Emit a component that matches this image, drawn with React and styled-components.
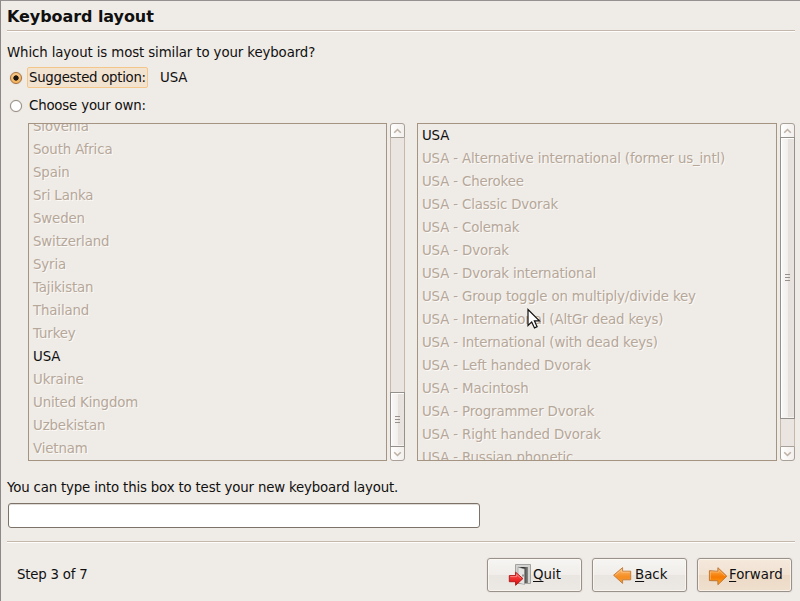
import React from "react";
import styled, { createGlobalStyle, css } from "styled-components";

const GlobalStyle = createGlobalStyle`
  *, *::before, *::after { box-sizing: border-box; }
  body { margin: 0; background: #efebe7; }
`;

const Window = styled.main`
  position: relative;
  width: 800px;
  height: 601px;
  padding: 0 5px 0 6px;
  overflow: hidden;
  display: flex;
  flex-direction: column;
  background: #efebe6;
  border-top: 1px solid #949190;
  border-left: 1px solid #8c8988;
  color: #101010;
  font: 13.33px/20px "DejaVu Sans", sans-serif;
  white-space: nowrap;
  cursor: default;
`;

const Title = styled.h1`
  margin: 0;
  height: 29px;
  padding-top: 6px;
  font-size: 16px;
  line-height: 20px;
  font-weight: bold;
  letter-spacing: -0.07px;
`;

const Separator = styled.hr`
  flex: none;
  width: 788px;
  height: 2px;
  margin: 0;
  border: 0;
  border-top: 1px solid #c3b8ab;
  background: #fffefc;
`;

const Question = styled.p`
  width: fit-content;
  margin: ${(p) => p.$gap}px 0 0;
  letter-spacing: ${(p) => p.$tracking || 0}px;
`;

const Option = styled.label`
  display: flex;
  align-items: center;
  height: 21px;
  margin-top: ${(p) => p.$gap}px;
  padding-left: 3px;
`;

const Radio = styled.span`
  width: 12px;
  height: 12px;
  margin-top: 1px;
  border-radius: 50%;
  border: 1px solid ${(p) => (p.$checked ? "#a9713a" : "#968d85")};
  background: ${(p) =>
    p.$checked
      ? "radial-gradient(circle, #1c1712 0 2.3px, transparent 3px), linear-gradient(#f8c98a, #f4b45d)"
      : "#fff"};
  box-shadow: 0 0 1px #b9afa5;
`;

const OptionLabel = styled.span`
  width: 121px;
  height: 21px;
  margin-left: 5px;
  padding: 0 1px;
  line-height: 19px;
  letter-spacing: ${(p) => (p.$focused ? "-0.29px" : "-0.18px")};
  border: 1px solid ${(p) => (p.$focused ? "#f5c689" : "transparent")};
  border-radius: 2px;
  background: ${(p) => (p.$focused ? "#f2e2d0" : "none")};
`;

const OptionValue = styled.span`
  margin-left: 12px;
  line-height: 21px;
  letter-spacing: -0.1px;
`;

const Lists = styled.section`
  display: flex;
  flex: none;
  height: 338px;
  margin: 7px 0 0 21px;
`;

const ListBox = styled.ul`
  width: ${(p) => p.$width}px;
  margin: 0 3px 0 0;
  padding: 0 4px;
  overflow: hidden;
  list-style: none;
  border: 1px solid #a59482;
  letter-spacing: ${(p) => p.$tracking}px;
`;

const ListItem = styled.li`
  height: 23px;
  line-height: 23px;
  &:first-child { margin-top: ${(p) => p.$scroll}px; }
  ${(p) =>
    p.$selected
      ? css`color: #101010;`
      : css`color: #b5a799; text-shadow: 1px 1px 0 #fcfaf7;`}
`;

const Scrollbar = styled.div`
  display: flex;
  flex-direction: column;
  width: 15px;
  margin-right: ${(p) => p.$gap}px;
  background: #eae5e0;
  border-radius: 3px;
`;

const Stepper = styled.div`
  flex: none;
  display: grid;
  place-items: center;
  height: 15px;
  border: 1px solid #a9a098;
  border-radius: ${(p) => (p.$down ? "0 0 3px 3px" : "3px 3px 0 0")};
  background: linear-gradient(90deg, #fff, #f2efec);
  svg { transform: ${(p) => (p.$down ? "scaleY(-1)" : "none")}; }
`;

const Trough = styled.div`
  flex: none;
  height: ${(p) => p.$height}px;
  border: solid #c6b9ac;
  border-width: 0 1px;
`;

const Thumb = styled.div`
  flex: none;
  display: grid;
  place-items: center;
  height: ${(p) => p.$height}px;
  margin: -1px 0;
  padding-bottom: 1px;
  z-index: 1;
  border: 1px solid #96908a;
  background: linear-gradient(90deg, #faf9f8 0, #f2efed 50%, #e6e0dc 51%, #eae4e0 100%);
  box-shadow: inset 1px 1px 0 #fff, inset 0 -1px 0 #f6f4f2;
`;

const Grip = styled.span`
  width: 5px;
  height: 7px;
  border: solid #98918b;
  border-width: 1px 0;
  background: linear-gradient(#98918b, #98918b) 0 2px / 5px 1px no-repeat;
`;

const TestInput = styled.input`
  flex: none;
  width: 472px;
  height: 25px;
  margin: 5px 0 13px 1px;
  padding: 0 5px;
  border: 1px solid #7d7268;
  border-radius: 3px;
  outline: 0;
  background: #fff;
  box-shadow: inset 0 1px 0 #dedbd8;
  font: inherit;
`;

const Footer = styled.footer`
  display: flex;
  padding: 15px 3px 0 10px;
  gap: 10px;
`;

const Step = styled.span`
  flex: 1;
  margin-top: 7px;
  letter-spacing: -0.22px;
`;

const Button = styled.button`
  display: flex;
  align-items: center;
  justify-content: flex-start;
  width: 95px;
  height: 34px;
  padding: 0 0 1px ${(p) => p.$inset}px;
  border: 1px solid #99928a;
  border-radius: 3px;
  color: #101010;
  font: inherit;
  background: ${(p) =>
    p.$primary
      ? "linear-gradient(#f5e9dc 0, #f1e2d2 49%, #ecdac6 50%, #efdfce 100%)"
      : "linear-gradient(#f7f5f3 0, #f0edea 49%, #e9e5e1 50%, #ece8e4 100%)"};
  box-shadow: inset 0 0 0 1px #fffaf5aa, 0 0 0 1px #e9e4df;
  svg { flex: none; margin-right: 1px; }
`;

const Mnemonic = styled.span`
  text-decoration: underline;
  text-decoration-thickness: 1px;
  text-underline-offset: 2px;
  text-decoration-skip-ink: none;
`;

const PointerIcon = styled.svg`
  position: absolute;
  left: 525px;
  top: 307px;
`;

const Chevron = () => (
  <svg width="9" height="6" viewBox="0 0 9 6">
    <path d="M1.2 4.7 4.5 1.5 7.8 4.7" fill="none" stroke="#beb2a6" strokeWidth="1.6" />
  </svg>
);

const BackIcon = () => (
  <svg width="22" height="23" viewBox="0 0 22 23">
    <defs>
      <linearGradient id="backFill" x1="0" y1="0" x2="0" y2="1">
        <stop offset="0" stopColor="#fbbd73" />
        <stop offset=".6" stopColor="#f58d22" />
        <stop offset="1" stopColor="#f69a35" />
      </linearGradient>
    </defs>
    <path
      d="M18.7 8.2H10.6V4.6L1.6 12.2 10.6 20.4V16.8H18.7z"
      fill="url(#backFill)"
      stroke="#c5803f"
      strokeLinejoin="round"
    />
    <path d="M17.7 9.2H9.6V6.9L3.2 12.2" fill="none" stroke="#ffd9aa" strokeWidth=".7" opacity=".7" />
  </svg>
);

const ForwardIcon = () => (
  <svg width="22" height="23" viewBox="0 0 22 23">
    <defs>
      <linearGradient id="forwardFill" x1="0" y1="0" x2="0" y2="1">
        <stop offset="0" stopColor="#fcb45a" />
        <stop offset=".55" stopColor="#f57900" />
        <stop offset="1" stopColor="#ffa320" />
      </linearGradient>
    </defs>
    <path
      d="M3.4 7.7 11.9 8.3V4.7L20.8 13.2 11.9 21.7V17.8L3.4 17.6z"
      fill="url(#forwardFill)"
      stroke="#bf7634"
      strokeLinejoin="round"
    />
    <path d="M4.4 16.6V8.8L12.9 9.2V7.2L19.2 13.2" fill="none" stroke="#ffcf92" strokeWidth=".7" opacity=".7" />
  </svg>
);

const QuitIcon = () => (
  <svg width="24" height="23" viewBox="0 0 24 23">
    <defs>
      <linearGradient id="doorway">
        <stop offset="0" stopColor="#111" />
        <stop offset=".55" stopColor="#333" />
        <stop offset="1" stopColor="#8a8a88" />
      </linearGradient>
      <linearGradient id="quitFill" x1="0" y1="0" x2="0" y2="1">
        <stop offset="0" stopColor="#ff5a5a" />
        <stop offset="1" stopColor="#dc0505" />
      </linearGradient>
    </defs>
    <path d="M7.5 1.5h15v19h-15z" fill="#d3d3d1" stroke="#a3a39f" />
    <path d="M10 4h10v16H10z" fill="url(#doorway)" />
    <path d="m10 4 6.5 2V21.5L10 20z" fill="#e4e4e2" stroke="#888" strokeWidth=".5" />
    <path d="M14.4 11.5h1.2v2h-1.2z" fill="#666" />
    <path d="M1.3 12.6H7.6V9.2L14.9 15.6 7.6 22.3V18.7H1.3z" fill="url(#quitFill)" stroke="#b51d1d" strokeLinejoin="round" />
    <path d="M2.3 13.6H8.6V11.4L12.9 15.2" fill="none" stroke="#ff9d9a" strokeWidth=".7" />
  </svg>
);

const Pointer = () => (
  <PointerIcon width="15" height="23" viewBox="0 0 15 23">
    <path
      d="M2 1.5v16l3.7-3.6 2.8 6 2.6-1.2-2.7-5.8h5z"
      fill="#fff"
      stroke="#111"
      strokeWidth="1.2"
    />
  </PointerIcon>
);

const countries = [
  "Slovenia", "South Africa", "Spain", "Sri Lanka", "Sweden", "Switzerland", "Syria", "Tajikistan",
  "Thailand", "Turkey", "USA", "Ukraine", "United Kingdom", "Uzbekistan", "Vietnam",
];

const variants = [
  "USA", "USA - Alternative international (former us_intl)", "USA - Cherokee", "USA - Classic Dvorak",
  "USA - Colemak", "USA - Dvorak", "USA - Dvorak international",
  "USA - Group toggle on multiply/divide key", "USA - International (AltGr dead keys)",
  "USA - International (with dead keys)", "USA - Left handed Dvorak", "USA - Macintosh",
  "USA - Programmer Dvorak", "USA - Right handed Dvorak", "USA - Russian phonetic",
];

const LayoutList = ({ items, width, tracking, scroll = 0 }) => (
  <ListBox $width={width} $tracking={tracking}>
    {items.map((name) => (
      <ListItem key={name} $selected={name === "USA"} $scroll={scroll}>{name}</ListItem>
    ))}
  </ListBox>
);

const ListScrollbar = ({ before, thumb, after, gap = 0 }) => (
  <Scrollbar $gap={gap}>
    <Stepper><Chevron /></Stepper>
    <Trough $height={before} />
    <Thumb $height={thumb}><Grip /></Thumb>
    <Trough $height={after} />
    <Stepper $down><Chevron /></Stepper>
  </Scrollbar>
);

export default function App() {
  return (
    <>
      <GlobalStyle />
      <Window>
        <Title>Keyboard layout</Title>
        <Separator />
        <Question $gap={11} $tracking={-0.11}>Which layout is most similar to your keyboard?</Question>
        <Option $gap={4}>
          <Radio $checked />
          <OptionLabel $focused>Suggested option:</OptionLabel>
          <OptionValue>USA</OptionValue>
        </Option>
        <Option $gap={7}>
          <Radio />
          <OptionLabel>Choose your own:</OptionLabel>
        </Option>
        <Lists>
          <LayoutList items={countries} width={359} tracking={-0.13} scroll={-9} />
          <ListScrollbar before={255} thumb={55} after={0} gap={12} />
          <LayoutList items={variants} width={360} tracking={-0.14} />
          <ListScrollbar before={0} thumb={282} after={28} />
        </Lists>
        <Question $gap={17} $tracking={-0.17}>You can type into this box to test your new keyboard layout.</Question>
        <TestInput aria-label="Keyboard test" />
        <Separator />
        <Footer>
          <Step>Step 3 of 7</Step>
          <Button $inset={20}><QuitIcon /><span><Mnemonic>Q</Mnemonic>uit</span></Button>
          <Button $inset={19}><BackIcon /><span><Mnemonic>B</Mnemonic>ack</span></Button>
          <Button $primary $inset={8}><ForwardIcon /><span><Mnemonic>F</Mnemonic>orward</span></Button>
        </Footer>
        <Pointer />
      </Window>
    </>
  );
}
